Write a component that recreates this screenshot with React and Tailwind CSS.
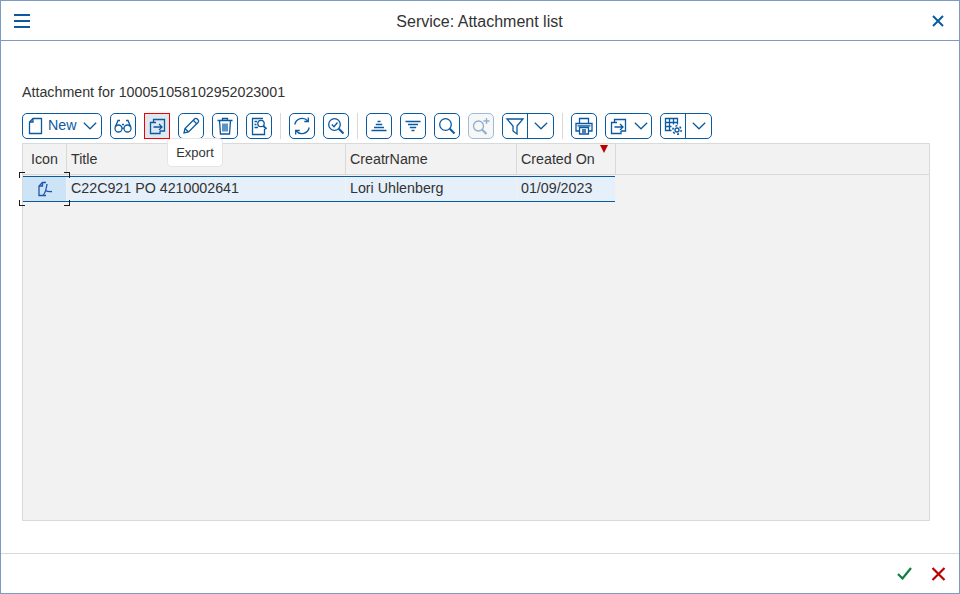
const BLUE = '#0a5aa0';

function Chevron({ className = '' }) {
  return (
    <svg width="14" height="8" viewBox="0 0 14 8" fill="none" stroke="#0a5aa0" strokeWidth="1.2" className={className}>
      <path d="M0.8 0.8 7 6.8 13.2 0.8" />
    </svg>
  );
}

function Icon({ children, size = 20, opacity = 1 }) {
  return (
    <svg width={size} height={size} viewBox="0 0 20 20" fill="none" stroke={BLUE} strokeWidth="1.3" opacity={opacity}>
      {children}
    </svg>
  );
}

const ExportGlyph = () => (
  <Icon>
    <path d="M6.500 6V3.500H17.500V15H13" />
    <path d="M9 6.500H3.500V17.500H13V15" />
    <path d="M6.500 11H15M12 8l3 3-3 3" />
  </Icon>
);

function IconButton({ children, active, disabled }) {
  return (
    <button
      className={`w-[26px] h-[26px] shrink-0 flex items-center justify-center border ${
        active
          ? 'border-[#f00000] bg-[#dfe8f1] rounded-none relative z-20'
          : disabled
            ? 'border-[#9dbcdb] bg-[#f7f7f7] rounded-[5px]'
            : 'border-[#0a5aa0] bg-white rounded-[5px]'
      }`}
    >
      {children}
    </button>
  );
}

function SplitButton({ children }) {
  return (
    <div className="flex h-[26px] w-[52px] shrink-0 border border-[#0a5aa0] rounded-[5px] bg-white">
      <div className="w-[25px] flex items-center justify-center border-r border-[#0a5aa0]">{children}</div>
      <div className="flex-1 flex items-center justify-center">
        <Chevron />
      </div>
    </div>
  );
}

const Sep = () => <div className="w-px h-[26px] bg-[#d9d9d9] shrink-0" />;

function Corner({ className }) {
  return <span className={`absolute w-[6px] h-[6px] border-[#1a1a1a] ${className}`} />;
}

export default function App() {
  return (
    <div
      className="w-[960px] h-[594px] flex flex-col bg-white border border-[#7a9cc0] text-[#333333] text-[14.25px] overflow-hidden"
      style={{ fontFamily: '"Liberation Sans", Arial, sans-serif' }}
    >
      {/* title bar */}
      <div className="h-[40px] shrink-0 flex items-center justify-between border-b border-[#7a9cc0] pl-[13px] pr-[14px]">
        <div className="flex flex-col gap-[4px] w-[16px]">
          <span className="h-[2px] bg-[#0a5aa0]" />
          <span className="h-[2px] bg-[#0a5aa0]" />
          <span className="h-[2px] bg-[#0a5aa0]" />
        </div>
        <div className="text-[16px] text-[#333] pt-[2px] pr-[2px]">Service: Attachment list</div>
        <svg width="14" height="14" viewBox="0 0 14 14" stroke="#0a5aa0" strokeWidth="2">
          <path d="M2 2 12 12M12 2 2 12" />
        </svg>
      </div>

      {/* content */}
      <div className="flex-1 flex flex-col pl-[21px] pr-[29px] pt-[41px]">
        <div className="h-[20px] leading-[20px]">Attachment for 100051058102952023001</div>

        <div className="mt-[11px] flex items-center gap-[8px] relative">
          <button className="w-[80px] h-[26px] shrink-0 flex items-center border border-[#0a5aa0] rounded-[5px] bg-white pl-[5px] text-[#0a5aa0]">
            <svg width="15" height="18" viewBox="0 0 15 18" fill="none" stroke="#0a5aa0" strokeWidth="1.3">
              <path d="M5 1.500H13.500V16.500H1.500V5L5 1.500ZM5 1.500V5H1.500" />
            </svg>
            <span className="ml-[5px]">New</span>
            <Chevron className="ml-[6px]" />
          </button>
          <IconButton>
            <Icon>
              <circle cx="5.500" cy="12.500" r="3.500" />
              <circle cx="14.500" cy="12.500" r="3.500" />
              <path d="M9 12.500c.7-.6 1.300-.6 2 0M2.300 11 5 4.500h2M17.700 11 15 4.500h-2M9 8.500h2" />
            </Icon>
          </IconButton>
          <IconButton active>
            <ExportGlyph />
          </IconButton>
          <IconButton>
            <Icon>
              <path d="M3 17l1-4.500L13.500 3c.8-.8 2-.8 2.800 0l.7.700c.8.800.8 2 0 2.800L7.500 16z" />
              <path d="M4 12.500 7.500 16M12.300 4.300l3.400 3.400" />
            </Icon>
          </IconButton>
          <IconButton>
            <Icon>
              <path d="M2.500 4.500h15M7.500 4.500V2.500h5v2M4.500 4.500l1 13.500h9l1-13.500" />
              <path d="M8 7.500v8M10 7.500v8M12 7.500v8" />
            </Icon>
          </IconButton>
          <IconButton>
            <Icon>
              <path d="M14 2.500H3.500V18.500H15.500V13" />
              <path d="M5.500 5.500H8M5.500 8.500H7.500M5.500 11.500H9" />
              <circle cx="12" cy="7.500" r="3.200" />
              <path d="M14.300 9.800 17.500 13" strokeWidth="1.800" />
            </Icon>
          </IconButton>
          <Sep />
          <IconButton>
            <Icon>
              <path d="M2.800 8.500A7.500 7.500 0 0 1 15.800 5M17.200 11.500A7.500 7.500 0 0 1 4.200 15" />
              <path d="M16.300 1.500v4h-4M3.700 18.500v-4h4" />
            </Icon>
          </IconButton>
          <IconButton>
            <Icon>
              <circle cx="8.500" cy="8.500" r="5.800" />
              <path d="M12.800 12.800 17.500 17.500" strokeWidth="2" />
              <path d="M5.800 8.500 8 10.700 11.500 6.500" />
            </Icon>
          </IconButton>
          <Sep />
          <IconButton>
            <Icon>
              <path d="M8.500 5.500h3M6.800 8.500h6.400M5 11.500h10M2.500 14.500h15" />
            </Icon>
          </IconButton>
          <IconButton>
            <Icon>
              <path d="M2.500 5.500h15M5 8.500h10M6.800 11.500h6.400M8.500 14.500h3" />
            </Icon>
          </IconButton>
          <IconButton>
            <Icon>
              <circle cx="8.500" cy="8.500" r="5.800" />
              <path d="M12.800 12.800 17.500 17.500" strokeWidth="2" />
            </Icon>
          </IconButton>
          <IconButton disabled>
            <Icon opacity={0.45}>
              <circle cx="7.500" cy="10" r="5" />
              <path d="M11.200 13.700 15.500 18" strokeWidth="2" />
              <path d="M15.500 2v6M12.500 5h6" />
            </Icon>
          </IconButton>
          <SplitButton>
            <Icon>
              <path d="M2 3h16l-6 7v8l-4-3v-5z" />
            </Icon>
          </SplitButton>
          <Sep />
          <IconButton>
            <Icon>
              <path d="M5.500 7V2.500h9V7" />
              <path d="M5 15H2V7.500h16V15h-3" />
              <path d="M5.500 11.500h9v6.500h-9zM8 14h4M8 16h4M3.500 9.800h13" />
            </Icon>
          </IconButton>
          <button className="w-[47px] h-[26px] shrink-0 flex items-center border border-[#0a5aa0] rounded-[5px] bg-white pl-[2px]">
            <ExportGlyph />
            <Chevron className="ml-[6px]" />
          </button>
          <SplitButton>
            <Icon>
              <path d="M8.500 14.500H2.500V2.500h12v6M2.500 6.500h12M2.500 10.500h6M6.500 2.500v12M10.500 2.500v6" />
              <circle cx="14" cy="14" r="2" />
              <circle cx="14" cy="14" r="4.200" strokeDasharray="2 2.400" strokeWidth="1.500" />
            </Icon>
          </SplitButton>

          {/* tooltip */}
          <div className="absolute left-[145px] top-[25px] z-10 w-[56px] h-[29px] flex items-center justify-center bg-white border border-[#e5e5e5] rounded-[4px] text-[13px] text-[#333]">
            Export
          </div>
        </div>

        {/* table */}
        <div className="mt-[4px] h-[378px] border border-[#d9d9d9] bg-[#f2f2f2] flex flex-col">
          <div className="h-[31px] flex border-b border-[#d9d9d9] shrink-0">
            <div className="w-[44px] border-r border-[#d9d9d9] flex items-center justify-center pt-[1px]">Icon</div>
            <div className="w-[279px] border-r border-[#d9d9d9] flex items-center pl-[4px] pt-[1px]">Title</div>
            <div className="w-[171px] border-r border-[#d9d9d9] flex items-center pl-[4px] pt-[1px]">CreatrName</div>
            <div className="w-[99px] border-r border-[#d9d9d9] flex items-center pl-[4px] pt-[1px] relative">
              Created On
              <span className="absolute right-[7px] top-[1px] w-0 h-0 border-x-[4px] border-x-transparent border-t-[8px] border-t-[#bb0000]" />
            </div>
          </div>
          <div className="h-[26px] w-[592px] mt-px flex border-y border-[#0a5aa0] bg-[#e5f0fa]">
            <div className="w-[44px] bg-[#cde3f6] border-r border-[#f2f2f2] flex items-center justify-center relative">
              <svg width="18" height="18" viewBox="0 0 18 18" fill="none" stroke="#1f55b0" strokeWidth="1.300">
                <path d="M10 2.500H6.500L3 6V15.500H10" />
                <path d="M6.500 2.500V6H3" />
                <path d="M11 4C10.500 8 9.500 12 7.500 15M9.500 10.500C11 11.500 13.500 11.800 16 11.500" />
              </svg>
              <Corner className="left-[-4px] top-[-5px] border-l border-t" />
              <Corner className="right-[-4px] top-[-5px] border-r border-t" />
              <Corner className="left-[-4px] bottom-[-5px] border-l border-b" />
              <Corner className="right-[-4px] bottom-[-5px] border-r border-b" />
            </div>
            <div className="w-[279px] border-r border-[#f2f2f2] flex items-center pl-[4px]">C22C921 PO 4210002641</div>
            <div className="w-[171px] border-r border-[#f2f2f2] flex items-center pl-[4px]">Lori Uhlenberg</div>
            <div className="w-[98px] flex items-center pl-[4px]">01/09/2023</div>
          </div>
        </div>
      </div>

      {/* footer */}
      <div className="h-[40px] shrink-0 flex items-center justify-end gap-[19px] border-t border-[#d9d9d9] pr-[13px]">
        <svg width="15" height="13" viewBox="0 0 15 13" fill="none" stroke="#107e3e" strokeWidth="2.200">
          <path d="M1 7 5.500 11.500 14 1" />
        </svg>
        <svg width="15" height="14" viewBox="0 0 15 14" fill="none" stroke="#bb0000" strokeWidth="2.200">
          <path d="M1.500 1 13.500 13M13.500 1 1.500 13" />
        </svg>
      </div>
    </div>
  );
}
